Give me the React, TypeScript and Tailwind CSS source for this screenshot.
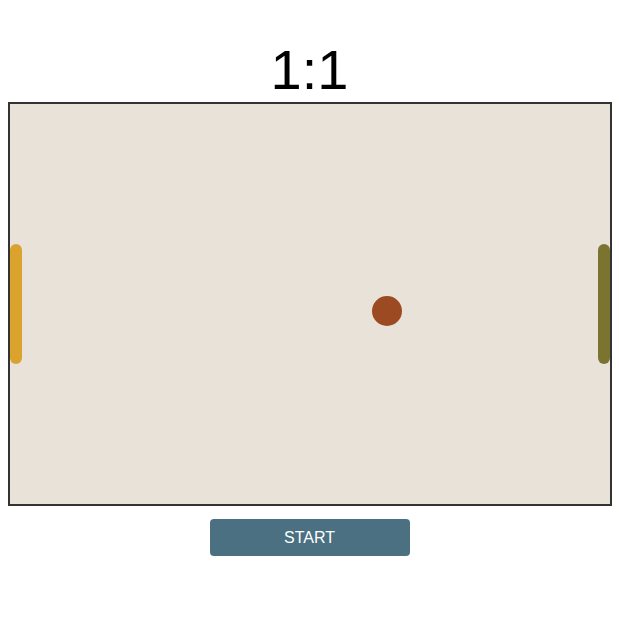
export default function App() {
  return (
    <div className="flex flex-col items-center bg-white w-[619px] h-[619px]" style={{ fontFamily: '"Liberation Sans", Arial, sans-serif' }}>
      <div className="pt-[38px] text-[56px] leading-[64px] text-black">1:1</div>
      <div className="w-[604px] h-[404px] border-2 border-[#333333] bg-[#e9e2d8] flex items-center justify-between relative">
        <div className="w-[12px] h-[120px] rounded-full bg-[#d9a32e] ml-0" />
        <div className="absolute left-[362px] top-[192px] w-[30px] h-[30px] rounded-full bg-[#9b4a22]" />
        <div className="w-[12px] h-[120px] rounded-full bg-[#7b7431] mr-0" />
      </div>
      <button className="mt-[13px] w-[200px] h-[37px] rounded-[4px] bg-[#4a7082] text-white text-[16px]">START</button>
    </div>
  );
}
